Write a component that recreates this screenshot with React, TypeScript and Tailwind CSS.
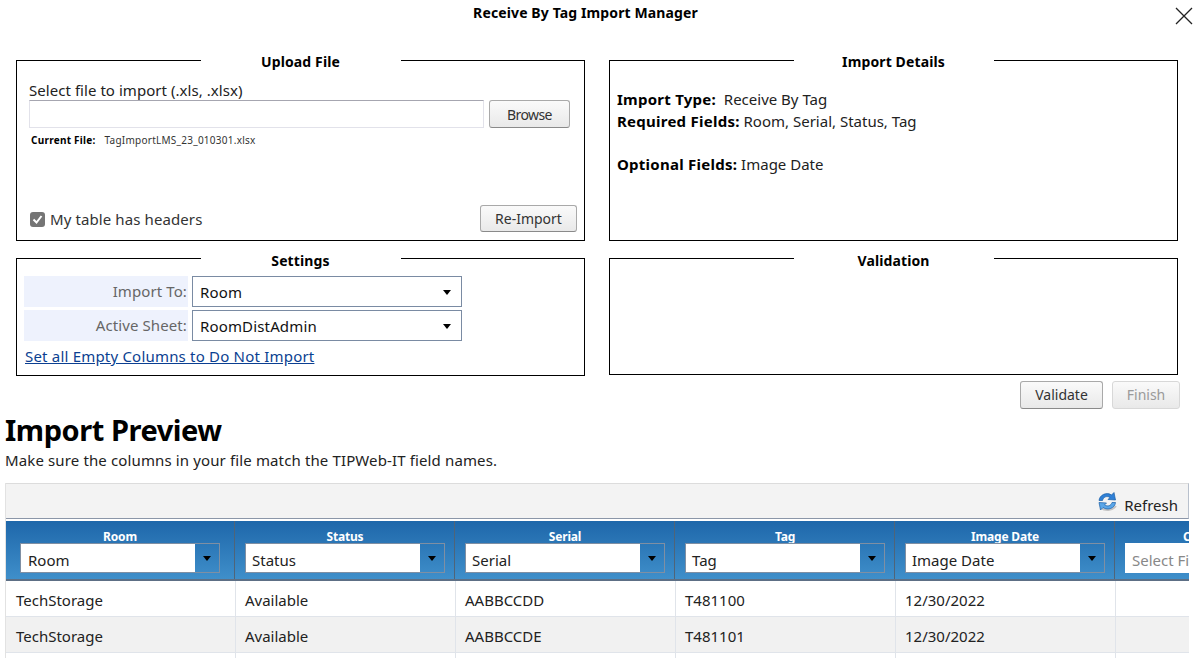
const font = "font-['Noto_Sans','Open_Sans',sans-serif]";

function Panel({ title, legendPad, className, children }: { title: string; legendPad: string; className: string; children?: React.ReactNode }) {
  return (
    <fieldset className={`border border-black min-w-0 px-[7px] ${className}`}>
      <legend className={`mx-auto w-[200px] text-center text-[14px] leading-[20px] font-bold tracking-[0.12px] text-black ${legendPad}`}>{title}</legend>
      {children}
    </fieldset>
  );
}

function GrayButton({ label, disabled, className }: { label: string; disabled?: boolean; className: string }) {
  return (
    <button
      disabled={disabled}
      className={`rounded-[3px] border text-[14px] bg-gradient-to-b from-[#fafafa] to-[#e9e9e9] ${
        disabled ? "border-[#d8d8d8] text-[#9a9a9a]" : "border-[#a9a9a9] border-b-[#8a8a8a] text-[#333]"
      } ${className}`}
    >
      {label}
    </button>
  );
}

function SettingSelect({ label, value }: { label: string; value: string }) {
  return (
    <div className="flex h-[31px] items-stretch gap-[4px]">
      <div className="flex w-[164px] items-center justify-end bg-[#eef2fd] pr-[1px] text-[15px] tracking-[0.1px] text-[#666]">{label}</div>
      <div className="flex w-[270px] items-center justify-between border border-[#7a8ba3] pl-[7px] pr-[10px] pt-[1px] text-[15px] tracking-[0.15px] text-[#111]">
        <span>{value}</span>
        <span className="h-0 w-0 border-x-[4.5px] border-t-[5px] border-x-transparent border-t-black" />
      </div>
    </div>
  );
}

const columns = [
  { name: "Room", value: "Room", a: "TechStorage", b: "TechStorage" },
  { name: "Status", value: "Status", a: "Available", b: "Available" },
  { name: "Serial", value: "Serial", a: "AABBCCDD", b: "AABBCCDE" },
  { name: "Tag", value: "Tag", a: "T481100", b: "T481101" },
  { name: "Image Date", value: "Image Date", a: "12/30/2022", b: "12/30/2022" },
];

function RefreshIcon() {
  return (
    <svg width="21" height="21" viewBox="0 0 21 21" fill="none">
      {/* soft shadow under the arrows */}
      <path d="M4 17C8 20 15 20 19 15" stroke="#c4c4c4" strokeWidth="2" />
      <path d="M2 9.5C2.5 4 9.5 0.5 14.5 4L17 1.5L18.5 9L11 8.5L13 6.5C9.5 4.5 6.5 6 5.5 9.5Z" fill="#2f80d6" stroke="#1a5ea6" strokeWidth="0.7" />
      <path d="M18.5 11.5C18 17 11 20 6 16.5L3.5 19L2 11.5L9.5 12L7.5 14C11 16 14 14.5 15 11.5Z" fill="#5aa6e8" stroke="#1a5ea6" strokeWidth="0.7" />
    </svg>
  );
}

export default function App() {
  return (
    <div className={`${font} h-[658px] w-[1200px] overflow-hidden bg-white text-black`}>
      {/* dialog title */}
      <div className="relative h-[48px] pt-[3px] pr-[29px] text-center text-[14px] leading-[20px] font-bold tracking-[0.12px]">
        Receive By Tag Import Manager
        <svg className="absolute top-[7px] right-[7px]" width="18" height="18" viewBox="0 0 18 18" fill="none" stroke="#222" strokeWidth="1.3">
          <path d="M1 1L17 17M17 1L1 17" />
        </svg>
      </div>

      <div className="ml-[16px] grid w-[1162px] grid-cols-[569px_569px] items-start gap-x-[24px] gap-y-[4px]">
        <Panel title="Upload File" legendPad="pt-[4px]" className="flex h-[193px] flex-col">
          <div className="px-[5px] pt-[8px] text-[15px] leading-[20px] tracking-[0.05px] text-[#222]">Select file to import (.xls, .xlsx)</div>
          <div className="flex gap-[5px] px-[5px]">
            <div className="h-[28px] w-[455px] border border-[#e2e2ea] border-t-[#a6a6b0]" />
            <GrayButton label="Browse" className="h-[28px] w-[81px] tracking-[-0.6px]" />
          </div>
          <div className="mt-[5px] flex gap-[9px] px-[7px] text-[10px] leading-[14px] tracking-[0.25px]">
            <span className="font-bold">Current File:</span>
            <span className="text-[#333]">TagImportLMS_23_010301.xlsx</span>
          </div>
          <div className="mt-auto mb-[8px] flex items-center justify-between pl-[6px]">
            <label className="flex items-center gap-[5px] pt-[1px] text-[15px] tracking-[0.1px] text-[#333]">
              <span className="flex h-[15px] w-[15px] items-center justify-center rounded-[3px] bg-[#757575]">
                <svg width="11" height="11" viewBox="0 0 11 11" fill="none" stroke="#fff" strokeWidth="2">
                  <path d="M1.5 5.5L4.5 8.5L9.5 2" />
                </svg>
              </span>
              My table has headers
            </label>
            <GrayButton label="Re-Import" className="h-[27px] w-[97px]" />
          </div>
        </Panel>

        <Panel title="Import Details" legendPad="pt-[4px]" className="h-[193px]">
          <div className="pt-[17px] text-[15px] leading-[21.5px] text-[#222]">
            <div><b className="font-bold tracking-[0.25px] text-black">Import Type:</b>&nbsp; Receive By Tag</div>
            <div><b className="font-bold tracking-[0.25px] text-black">Required Fields:</b> Room, Serial, Status, Tag</div>
            <div className="mt-[21.5px]"><b className="font-bold tracking-[0.25px] text-black">Optional Fields:</b> Image Date</div>
          </div>
        </Panel>

        <Panel title="Settings" legendPad="pt-[6px]" className="h-[131px]">
          <div className="flex flex-col gap-[3px] pt-[5px]">
            <SettingSelect label="Import To:" value="Room" />
            <SettingSelect label="Active Sheet:" value="RoomDistAdmin" />
          </div>
          <a className="mt-[5px] ml-[1px] block text-[15px] leading-[20px] tracking-[0.2px] text-[#0b3f91] underline">Set all Empty Columns to Do Not Import</a>
        </Panel>

        <Panel title="Validation" legendPad="pt-[6px]" className="h-[130px]" />
      </div>

      <div className="ml-[1020px] mt-[5px] flex gap-[9px]">
        <GrayButton label="Validate" className="h-[28px] w-[83px] pb-[1px]" />
        <GrayButton label="Finish" disabled className="h-[28px] w-[68px] pb-[1px]" />
      </div>

      <h1 className="ml-[5px] mt-[3px] text-[29px] leading-[36px] font-bold tracking-[-0.45px]">Import Preview</h1>
      <p className="ml-[5px] mt-[2px] text-[15px] leading-[20px] tracking-[0.13px] text-[#222]">Make sure the columns in your file match the TIPWeb-IT field names.</p>

      {/* grid */}
      <div className="ml-[5px] mt-[13px] w-[1184px] overflow-hidden border-l border-[#e2e2e2]">
        <div className="flex h-[36px] items-center justify-end gap-[6px] border border-l-0 border-[#dcdcdc] border-r-[#b8c0cc] border-b-[#8b96a8] bg-[#f3f3f3] pr-[10px]">
          <RefreshIcon />
          <span className="pt-[9px] text-[15px] text-[#222]">Refresh</span>
        </div>
        <div className="mt-[2px] flex h-[60px] border-b-[2px] border-[#5d6f85] bg-gradient-to-b from-[#1e67aa] to-[#3f8fca]">
          {columns.map((c, i) => (
            <div key={c.name} className={`flex shrink-0 flex-col items-center border-r border-[#4f6478] ${i === 0 ? "w-[229px] px-[14px]" : "w-[220px] pl-[10px] pr-[9px]"}`}>
              <div className="h-[22px] pt-[8px] text-[12px] leading-[15px] font-bold tracking-[-0.2px] text-white">{c.name}</div>
              <div className="flex h-[30px] w-full border border-[#7f8fa3]">
                <div className={`flex flex-1 items-center bg-white pt-[5px] text-[15px] text-[#222] ${i === 0 ? "pl-[7px]" : "pl-[6px]"}`}>{c.value}</div>
                <div className="flex w-[24px] items-center justify-center">
                  <span className="h-0 w-0 border-x-[4.5px] border-t-[5px] border-x-transparent border-t-black" />
                </div>
              </div>
            </div>
          ))}
          <div className="w-[220px] shrink-0 pl-[10px]">
            <div className="h-[22px] pl-[58px] pt-[8px] text-[12px] leading-[15px] font-bold tracking-[-0.2px] text-white">Column</div>
            <div className="flex h-[30px] items-center whitespace-nowrap bg-white pl-[7px] pt-[5px] text-[15px] text-[#888]">Select Field</div>
          </div>
        </div>
        {[0, 1, 2].map((row) => (
          <div key={row} className={`flex h-[36px] border-b border-[#e0e4ea] ${row === 1 ? "bg-[#f1f1f1]" : "bg-white"}`}>
            {columns.map((c, i) => (
              <div key={c.name} className={`flex shrink-0 items-center border-r border-[#e0e4ea] pt-[4px] text-[15px] text-[#222] ${i === 0 ? "w-[230px] pl-[10px]" : "w-[220px] pl-[9px]"}`}>
                {row === 0 ? c.a : row === 1 ? c.b : ""}
              </div>
            ))}
          </div>
        ))}
      </div>
    </div>
  );
}
